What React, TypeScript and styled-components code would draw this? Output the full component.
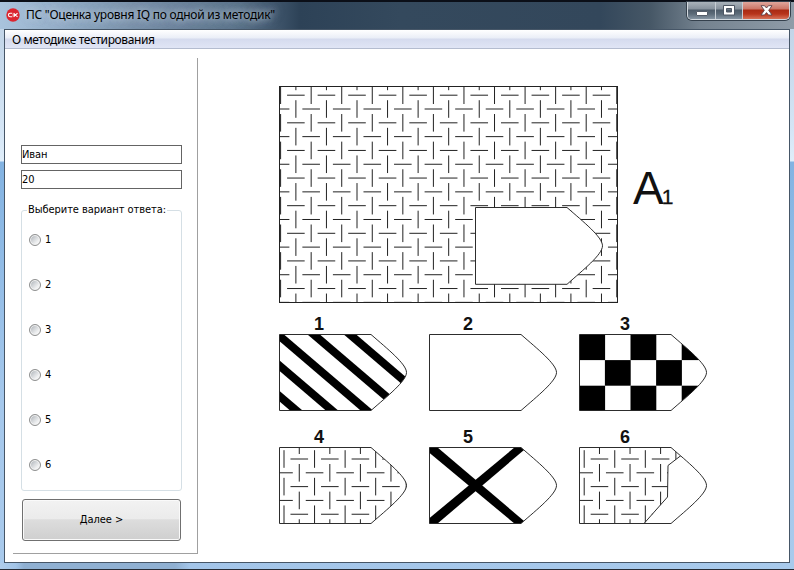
import React, { useState } from "react";
import styled, { createGlobalStyle, css } from "styled-components";

const GlobalStyle = createGlobalStyle`
  *, *::before, *::after { box-sizing: border-box; }
  html, body { margin: 0; padding: 0; overflow: hidden; }
`;

const uiFont = css`
  font-family: "DejaVu Sans Condensed", "DejaVu Sans", sans-serif;
  font-stretch: condensed;
  font-size: 11px;
  letter-spacing: -0.06px;
  color: #000;
`;

const Window = styled.div`
  width: 794px;
  height: 570px;
  display: flex;
  flex-direction: column;
  border-top: 2px solid #0b0f18;
  border-bottom: 1px solid #262c35;
  background:
    linear-gradient(90deg, transparent 0, transparent 300px, #2d4257 300px, #34495d 400px, #33475b 600px, #465766 650px, #74828f 700px, #8f9ca8 794px) 0 0 / 794px 27px no-repeat,
    linear-gradient(90deg, #a9c3dd 0, #91abc5 70px, #7890a9 140px, #5b738b 240px, #2d4257 300px, transparent 300px) 0 0 / 794px 27px no-repeat,
    linear-gradient(90deg, #b0cdeb 0, #a2c4e7 16px, #8fb0d2 24px, #8fb0d2 175px, #a3c5e9 190px, #a8caec 794px) 0 bottom / 794px 6px no-repeat,
    linear-gradient(180deg, #bdd0e4 0, #d5e6f6 130px, #e0eefa 159px, #83b3e2 160px, #a5c8ec 400px, #a9caec 570px);
`;

const TitleBar = styled.header`
  height: 27px;
  flex: none;
  display: flex;
  align-items: flex-start;
  padding-left: 6px;
`;

const Logo = styled.svg`
  flex: none;
  margin-top: 6px;
`;

const Title = styled.h1`
  margin: 3px 0 0 6px;
  font: 400 12px/20px "Noto Sans", sans-serif;
  letter-spacing: -0.26px;
  color: #000;
  white-space: nowrap;
  text-shadow: 0 0 6px rgba(200, 215, 230, 0.75), 0 0 10px rgba(200, 215, 230, 0.65), 0 0 12px rgba(200, 215, 230, 0.5);
`;

const Controls = styled.div`
  display: flex;
  margin-left: auto;
  margin-right: 4px;
  height: 18px;
  border: 1px solid #d3d9df;
  border-top: 0;
  border-radius: 0 0 5px 5px;
  box-shadow: 0 0 0 1px #34404c;
  overflow: hidden;
`;

const ControlButton = styled.button<{ $width: number; $danger?: boolean }>`
  width: ${(p) => p.$width}px;
  height: 17px;
  padding: 0;
  border: 0;
  border-left: 1px solid #c7ced5;
  display: flex;
  align-items: center;
  justify-content: center;
  background: ${(p) =>
    p.$danger
      ? "linear-gradient(#dfa69c 0, #cb7566 7px, #a92a14 8px, #b7341b 12px, #d77259 17px)"
      : "linear-gradient(#aab3bb 0, #87929d 7px, #4d5b69 8px, #5c6b79 12px, #8695a3 17px)"};
  &:first-child { border-left: 0; }
`;

const Client = styled.main`
  flex: 1;
  margin: 0 4px 6px;
  min-height: 0;
  border: 1px solid #465667;
  background: #fff;
  display: flex;
  flex-direction: column;
`;

const MenuBar = styled.nav`
  height: 19px;
  flex: none;
  padding-left: 7px;
  border-bottom: 1px solid #b4bccf;
  background: linear-gradient(#ffffff 0, #eaeef7 8px, #d5dbee 9px, #e0e5f5 18px);
  font: 400 12px/19px "Noto Sans", sans-serif;
  letter-spacing: -0.4px;
  color: #000;
`;

const Body = styled.div`
  flex: 1;
  display: flex;
  min-height: 0;
`;

const SidePanel = styled.aside`
  ${uiFont}
  width: 185px;
  height: 496px;
  margin: 9px 0 0 8px;
  padding: 87px 15px 0 8px;
  border-right: 1px solid #a0a0a0;
  border-bottom: 1px solid #a0a0a0;
`;

const Field = styled.input`
  ${uiFont}
  display: block;
  width: 161px;
  height: 19px;
  margin-bottom: 6px;
  padding: 0 0 1px;
  border: 1px solid #646464;
  background: #fff;
  outline: none;
`;

const Group = styled.fieldset`
  width: 161px;
  height: 288px;
  margin: 14px 0 0;
  padding: 0;
  border: 1px solid #d5dfe5;
  border-radius: 3px;
  min-width: 0;
`;

const GroupTitle = styled.legend`
  margin-left: 5px;
  padding: 0 1px;
  line-height: 14px;
  white-space: nowrap;
`;

const Option = styled.label`
  display: flex;
  align-items: center;
  height: 45px;
  padding-left: 7px;
  gap: 4px;
  line-height: 13px;
`;

const Radio = styled.input`
  appearance: none;
  width: 12px;
  height: 12px;
  margin: 0;
  border: 1px solid #8e8f8f;
  border-radius: 50%;
  box-shadow: inset 0 0 0 1px #f4f4f4;
  background: linear-gradient(135deg, #b3b8bd 2px, #d4d7da 6px, #f0f1f2 10px);
  &:checked { background: radial-gradient(circle, #205070 0 2.5px, #f4f4f4 3.5px); }
`;

const Next = styled.button`
  ${uiFont}
  display: block;
  width: 159px;
  height: 42px;
  margin: 8px 0 0 1px;
  padding: 0 0 1px;
  border: 1px solid #707070;
  border-radius: 3px;
  box-shadow: inset 0 0 0 1px #fafafa;
  background: linear-gradient(#f2f2f2 0, #ebebeb 48%, #dddddd 49%, #cfcfcf 100%);
`;

const Stage = styled.section`
  flex: 1;
  padding: 37px 0 0 81px;
  color: #111;
  font-family: "Liberation Sans", Arial, sans-serif;
`;

const Question = styled.div`
  display: flex;
  align-items: flex-start;
  height: 229px;
`;

const QuestionName = styled.div`
  margin: 76px 0 0 15px;
  font-size: 46px;
  line-height: 53px;
  letter-spacing: -2px;
`;

const QuestionIndex = styled.span`
  font-size: 21px;
  -webkit-text-stroke: 0.3px #111;
`;

const Answers = styled.div`
  display: grid;
  grid-template-columns: repeat(3, 150px);
  grid-auto-rows: 113px;
`;

const Figure = styled.figure`
  margin: 0;
`;

const Caption = styled.figcaption<{ $indent: number }>`
  height: 19px;
  padding-left: ${(p) => p.$indent}px;
  font-size: 18px;
  line-height: 19px;
  font-weight: 700;
`;

const Drawing = styled.svg`
  display: block;
`;

const FLAG = "M.5 .5H92C108 14.5 127.5 30 127.5 38.5S108 62.5 92 76.5H.5Z";
const TILE_W = 30.56;
const TILE_H = 27.62;

/** Woven pattern of alternating vertical and horizontal dashes. */
function weave(x0: number, y0: number, w: number, h: number) {
  const parts: string[] = [];
  const half = 8.8;
  for (let i = -2; i * (TILE_W / 2) < w + 20; i++) {
    for (let j = -2; j * (TILE_H / 2) < h + 20; j++) {
      const x = x0 + (i * TILE_W) / 2;
      const y = y0 + (j * TILE_H) / 2;
      parts.push(
        (i + j) % 2 === 0
          ? `M${x.toFixed(2)} ${(y - half).toFixed(2)}v${half * 2}`
          : `M${(x - half).toFixed(2)} ${y.toFixed(2)}h${half * 2}`
      );
    }
  }
  return parts.join("");
}

const Outline = ({ d = FLAG }: { d?: string }) => (
  <path d={d} fill="none" stroke="#222" strokeWidth="0.95" />
);

const Stripes = () => (
  <g>
    {[-71.7, -36, -1.2, 34.7, 71].map((x) => (
      <path key={x} d={`M${x - 6.2} .5h12.4l89 76h-12.4Z`} />
    ))}
  </g>
);

const Checks = () => (
  <g>
    {[0, 1, 2].flatMap((r) =>
      [0, 1, 2, 3, 4]
        .filter((c) => (c + r) % 2 === 0)
        .map((c) => <rect key={`${r}${c}`} x={c * 25.6 + 0.3} y={r * 25.6 + 0.5} width="25.8" height="25.6" />)
    )}
  </g>
);

const Cross = () => (
  <g>
    <path d="M0 0H8L95 74 92 77H86L0 5.5Z" />
    <path d="M0 77H8L95 3 92 0H86L0 71.5Z" />
  </g>
);

const Weave = ({ x }: { x: number }) => (
  <path d={weave(x, 12, 128, 77)} stroke="#222" strokeWidth="1" fill="none" />
);

const TornWeave = () => (
  <>
    <clipPath id="torn">
      <path d="M0 0H92L102 8.5 89 18.5 88.5 50 65 77H0Z" />
    </clipPath>
    <g clipPath="url(#torn)">
      <Weave x={5.2} />
    </g>
    <path d="M102 8.5 89 18.5 88.5 50 65 76.5" fill="none" stroke="#222" strokeWidth="0.95" />
  </>
);

const answers = [
  { id: 1, indent: 35, art: <Stripes /> },
  { id: 2, indent: 34, art: null },
  { id: 3, indent: 41, art: <Checks /> },
  { id: 4, indent: 35, art: <Weave x={5} /> },
  { id: 5, indent: 34, art: <Cross /> },
  { id: 6, indent: 41, art: <TornWeave /> },
];

export default function App() {
  const [choice, setChoice] = useState<number | null>(null);
  return (
    <>
      <GlobalStyle />
      <Window>
        <TitleBar>
          <Logo width="14" height="14" viewBox="0 0 14 14">
            <circle cx="7" cy="7" r="6.7" fill="#dc2530" />
            <path d="M6.3 5.2H4.2Q2.5 5.2 2.5 7T4.2 8.8H6.3M6.5 7H9M7.6 5.2 11.5 8.8M11.5 5.2 7.6 8.8" fill="none" stroke="#fff" strokeWidth="1.1" />
          </Logo>
          <Title>ПС "Оценка уровня IQ по одной из методик"</Title>
          <Controls>
            <ControlButton $width={27} aria-label="Свернуть">
              <svg width="12" height="12" viewBox="0 0 12 12">
                <rect x=".5" y="6.5" width="11" height="4" rx=".5" fill="#fff" stroke="#555e6b" />
              </svg>
            </ControlButton>
            <ControlButton $width={27} aria-label="Развернуть">
              <svg width="12" height="11" viewBox="0 0 12 11">
                <path d="M.5 .5h11v9.500h-11ZM3.500 3.500v3.500h5V3.500Z" fill="#fff" fillRule="evenodd" stroke="#4e5764" />
              </svg>
            </ControlButton>
            <ControlButton $width={47} $danger aria-label="Закрыть">
              <svg width="13" height="11" viewBox="0 0 13 11">
                <path d="M1 .7h3.500l2 2.300 2-2.300H12L8.700 5.300 12 10H8.500l-2-2.400-2 2.400H1l3.300-4.700Z" fill="#fff" stroke="#59414a" strokeWidth=".9" />
              </svg>
            </ControlButton>
          </Controls>
        </TitleBar>
        <Client>
          <MenuBar>О методике тестирования</MenuBar>
          <Body>
            <SidePanel>
              <Field defaultValue="Иван" />
              <Field defaultValue="20" />
              <Group>
                <GroupTitle>Выберите вариант ответа:</GroupTitle>
                {answers.map(({ id }) => (
                  <Option key={id}>
                    <Radio type="radio" name="answer" checked={choice === id} onChange={() => setChoice(id)} />
                    {id}
                  </Option>
                ))}
              </Group>
              <Next>Далее &gt;</Next>
            </SidePanel>
            <Stage>
              <Question>
                <Drawing width="339" height="217" viewBox="0 0 339 217">
                  <clipPath id="sheet">
                    <path d="M0 0H339V217H0Z" />
                  </clipPath>
                  <path clipPath="url(#sheet)" d={weave(1.6, 9.2, 339, 217)} stroke="#222" strokeWidth="1" fill="none" />
                  <rect x=".5" y=".5" width="338" height="216" fill="none" stroke="#222" />
                  <g transform="translate(196 121)">
                    <path d="M.5 .5H92C108 14.5 127.5 30 127.500 38.800S108 63 92 77.300H.5Z" fill="#fff" stroke="#222" strokeWidth="0.95" />
                  </g>
                </Drawing>
                <QuestionName>
                  A<QuestionIndex>1</QuestionIndex>
                </QuestionName>
              </Question>
              <Answers>
                {answers.map(({ id, indent, art }) => (
                  <Figure key={id}>
                    <Caption $indent={indent}>{id}</Caption>
                    <Drawing width="129" height="77" viewBox="0 0 129 77">
                      <clipPath id={`flag-${id}`}>
                        <path d={FLAG} />
                      </clipPath>
                      <g clipPath={`url(#flag-${id})`}>{art}</g>
                      <Outline />
                    </Drawing>
                  </Figure>
                ))}
              </Answers>
            </Stage>
          </Body>
        </Client>
      </Window>
    </>
  );
}
